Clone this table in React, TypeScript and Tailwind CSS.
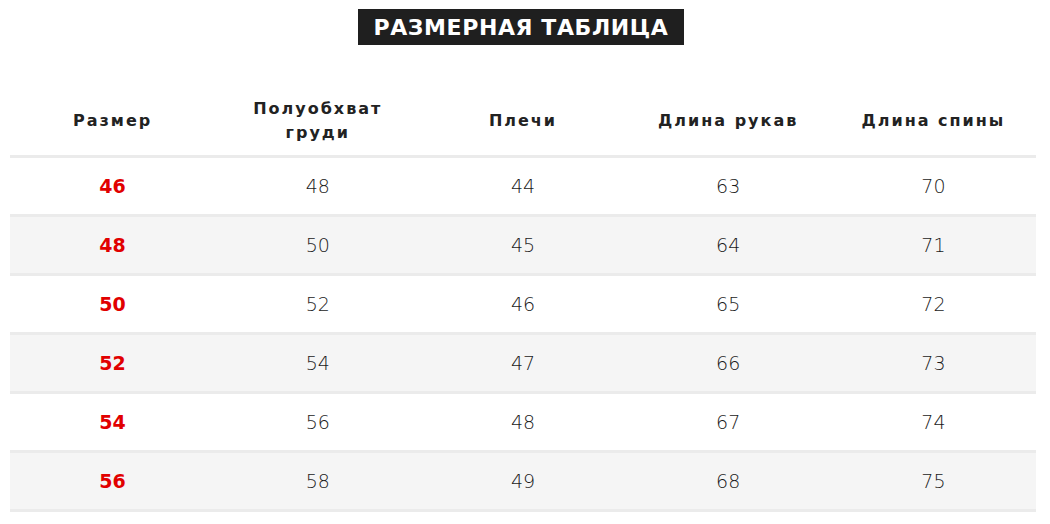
import React from "react";

const rows = [
  ["46", "48", "44", "63", "70"],
  ["48", "50", "45", "64", "71"],
  ["50", "52", "46", "65", "72"],
  ["52", "54", "47", "66", "73"],
  ["54", "56", "48", "67", "74"],
  ["56", "58", "49", "68", "75"],
];

const headers = ["Размер", "Полуобхват груди", "Плечи", "Длина рукав", "Длина спины"];

export default function App() {
  return (
    <div
      className="w-[1050px] h-[524px] bg-white overflow-hidden"
      style={{ fontFamily: '"DejaVu Sans", "Noto Sans", sans-serif' }}
    >
      <div className="flex justify-center pt-[9px] pr-[8px]">
        <div className="bg-[#1f1f1f] text-white font-bold text-[22px] h-[36px] w-[326px] flex items-center justify-center tracking-[0.6px]">
          РАЗМЕРНАЯ ТАБЛИЦА
        </div>
      </div>
      <div className="ml-[10px] w-[1026px] mt-[41px]">
        <div className="grid grid-cols-5 h-[72px] border-b-[3px] border-[#ebebeb]">
          {headers.map((h, i) => (
            <div
              key={i}
              className="flex items-center justify-center text-center font-bold text-[16px] leading-[24px] tracking-[2px] text-[#222]"
            >
              <span className={i === 1 ? "w-[150px]" : ""}>{h}</span>
            </div>
          ))}
        </div>
        {rows.map((r, ri) => (
          <div
            key={ri}
            className={`grid grid-cols-5 h-[59px] border-b-[3px] border-[#ebebeb] ${ri % 2 === 1 ? "bg-[#f5f5f5]" : "bg-white"}`}
          >
            {r.map((c, ci) => (
              <div
                key={ci}
                className={
                  ci === 0
                    ? "flex items-center justify-center text-[19px] font-bold text-[#e10000]"
                    : "flex items-center justify-center text-[19px] font-light text-[#1a1a1a]"
                }
              >
                {c}
              </div>
            ))}
          </div>
        ))}
      </div>
    </div>
  );
}
